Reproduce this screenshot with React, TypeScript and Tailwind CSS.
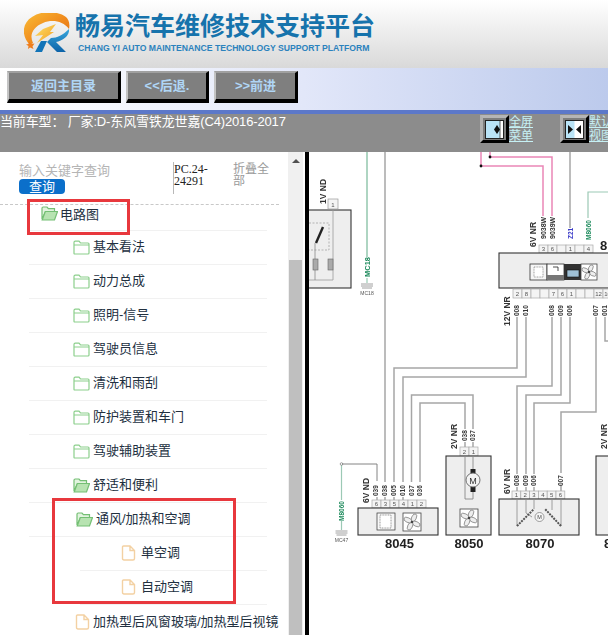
import React from "react";

const FONT = { fontFamily: '"Liberation Sans","Noto Sans CJK SC",sans-serif' };

function Logo() {
  return (
    <svg width="46" height="41" viewBox="24 13 46 41" className="shrink-0">
      <defs>
        <linearGradient id="ring" x1="0" y1="0" x2="1" y2="1">
          <stop offset="0" stopColor="#f9bd35" />
          <stop offset="0.55" stopColor="#f08a1d" />
          <stop offset="1" stopColor="#dd6a12" />
        </linearGradient>
        <linearGradient id="bolt" x1="0" y1="0" x2="1" y2="1">
          <stop offset="0" stopColor="#fde26a" />
          <stop offset="1" stopColor="#f29a1f" />
        </linearGradient>
        <linearGradient id="rblue" x1="0" y1="0" x2="0" y2="1">
          <stop offset="0" stopColor="#38a6dc" />
          <stop offset="1" stopColor="#0d63a8" />
        </linearGradient>
      </defs>
      <path d="M30 45 C21 36 22 23 32 17 C42 10 58 11 66 17 C69 20 70 24 69 29 C63 21 52 19 43 23 C33 27 29 35 33 43 Z" fill="url(#ring)" />
      <path d="M43 29 L56 24 L50 32 L54 32 L37 43 L43 35 L35 36 Z" fill="url(#bolt)" />
      <path d="M29 41 L31 44 L34.5 43.5 L32.5 46.5 L33.5 49 L30 47.5 L28 49 L28.5 46 L26 44.5 L28.5 44 Z" fill="#ee7d1c" />
      <path d="M69 29 C70 36 62 41 56 42 L66 52 L57 52 L47 42 L51 38 C57 38 63 35 69 29 Z" fill="url(#rblue)" />
      <path d="M41 41 L47 41 L42 52 L35 52 Z" fill="#1274b8" />
    </svg>
  );
}

function NavButton({ label, w }: { label: string; w: string }) {
  return (
    <div className={`${w} h-[32px] flex items-center justify-center bg-[#7f7f7f] border-t-2 border-l-2 border-t-[#a0a0a0] border-l-[#c4c4c4] border-r-[3px] border-b-[4px] border-r-black border-b-black text-[13px] font-bold text-[#b0d6f6]`}>
      {label}
    </div>
  );
}

function IconBtn({ double }: { double?: boolean }) {
  return (
    <div className="w-[29px] h-[28px] shrink-0 bg-[#7d7d7d] border-t-[3px] border-l-[3px] border-t-[#b5b5b5] border-l-[#b0b0b0] border-r-[3px] border-b-[3px] border-r-black border-b-black flex items-center justify-center">
      <svg width="19" height="19" viewBox="0 0 19 19">
        <rect x="0.5" y="0.5" width="18" height="18" fill="#b9e3f6" stroke="#222" />
        {double ? (
          <>
            <rect x="9.5" y="1" width="8.5" height="17" fill="#fff" />
            <path d="M3 5v9l5-4.5z" fill="#111" />
            <path d="M16 5v9l-5-4.5z" fill="#111" />
          </>
        ) : (
          <>
            <rect x="15" y="1" width="3" height="17" fill="#fff" />
            <path d="M15 1V18" stroke="#333" strokeWidth="0.8" />
            <path d="M12 5 L9 9.5 L12 14 L15 9.5Z" fill="#111" />
          </>
        )}
      </svg>
    </div>
  );
}

function FolderClosed() {
  return (
    <svg width="17" height="15" viewBox="0 0 17 15" className="shrink-0">
      <path d="M1 13.5 V2.5 Q1 1.2 2.3 1.2 H6 L7.5 3 H15 Q16 3 16 4 V13 Q16 14 15 14 H2 Q1 14 1 13.5Z M1 5 H16" fill="#fff" stroke="#8ccf8c" strokeWidth="1.2" />
    </svg>
  );
}

function FolderOpen() {
  return (
    <svg width="17" height="15" viewBox="0 0 17 15" className="shrink-0">
      <path d="M1 13 V2.2 Q1 1 2.2 1 H6 L7.4 2.7 H13.5 V5.5 H4.5 L1 13Z" fill="#e2f4df" stroke="#74bf74" strokeWidth="1.2" />
      <path d="M1.2 14 L4.3 5.5 H16.5 L13.5 14Z" fill="#b7e3b1" stroke="#74bf74" strokeWidth="1.2" />
    </svg>
  );
}

function FileIcon() {
  return (
    <svg width="15" height="16" viewBox="0 0 15 16" className="shrink-0">
      <path d="M2.5 1 H9 L13.5 5.5 V13.5 Q13.5 15 12 15 H3 Q1.5 15 1.5 13.5 V2 Q1.5 1 2.5 1Z M9 1 V5.5 H13.5" fill="#fff" stroke="#f3d1a3" strokeWidth="1.4" />
    </svg>
  );
}

type RowT = { label: string; kind: "closed" | "open" | "file"; pad: string };

const rows: RowT[] = [
  { label: "基本看法", kind: "closed", pad: "pl-[44px]" },
  { label: "动力总成", kind: "closed", pad: "pl-[44px]" },
  { label: "照明-信号", kind: "closed", pad: "pl-[44px]" },
  { label: "驾驶员信息", kind: "closed", pad: "pl-[44px]" },
  { label: "清洗和雨刮", kind: "closed", pad: "pl-[44px]" },
  { label: "防护装置和车门", kind: "closed", pad: "pl-[44px]" },
  { label: "驾驶辅助装置", kind: "closed", pad: "pl-[44px]" },
  { label: "舒适和便利", kind: "open", pad: "pl-[44px]" },
  { label: "通风/加热和空调", kind: "open", pad: "pl-[47px]" },
];

function Row({ r }: { r: RowT }) {
  return (
    <div className={`h-[34px] shrink-0 flex items-center gap-[3px] pb-px border-b border-[#f1f1f1] ml-[29px] w-[238px] whitespace-nowrap text-[13px] text-[#22303f] ${r.pad}`}>
      {r.kind === "closed" ? <FolderClosed /> : r.kind === "open" ? <FolderOpen /> : <FileIcon />}
      <span>{r.label}</span>
    </div>
  );
}

function Sub({ label }: { label: string }) {
  return (
    <div className="h-[34px] shrink-0 flex items-center gap-[5px] pb-px border-b border-[#f1f1f1] ml-[80px] w-[187px] pl-[41px] text-[13px] text-[#22303f] whitespace-nowrap">
      <FileIcon />
      <span>{label}</span>
    </div>
  );
}

const W = "#a6a6a6";
const SW = 1.5;
const TF = '"Liberation Sans",sans-serif';

function V({ x, y, t, s = 6.5, fill = "#333", b = true }: { x: number; y: number; t: string; s?: number; fill?: string; b?: boolean }) {
  return (
    <text x={x} y={y} transform={`rotate(-90 ${x} ${y})`} fontSize={s} fontFamily={TF} fontWeight={b ? 700 : 400} fill={fill}>
      {t}
    </text>
  );
}

function Pins({ x, y, w, h, labels }: { x: number; y: number; w: number; h: number; labels: string[] }) {
  return (
    <g>
      {labels.map((l, i) => (
        <g key={i}>
          <rect x={x + i * w} y={y} width={w} height={h} fill="#f4f4f4" stroke="#aaa" strokeWidth="0.7" />
          <text x={x + i * w + w / 2} y={y + h - 2} fontSize="6" textAnchor="middle" fontFamily={TF} fill="#555">
            {l}
          </text>
        </g>
      ))}
    </g>
  );
}

function Fan({ x, y, s }: { x: number; y: number; s: number }) {
  const c = s / 2;
  return (
    <g transform={`translate(${x} ${y})`}>
      <rect width={s} height={s} fill="#fff" stroke="#444" strokeWidth="0.8" />
      {[0, 90, 180, 270].map((a) => (
        <ellipse key={a} cx={c} cy={c - s * 0.25} rx={s * 0.13} ry={s * 0.24} fill="#eee" stroke="#666" strokeWidth="0.6" transform={`rotate(${a + 25} ${c} ${c})`} />
      ))}
      <circle cx={c} cy={c} r="1.3" fill="#444" />
    </g>
  );
}

function Ground({ x, y, label }: { x: number; y: number; label: string }) {
  return (
    <g>
      <path d={`M${x - 6} ${y}h12M${x - 6} ${y + 2}h12M${x - 5} ${y + 4}h10`} stroke="#888" strokeWidth="0.8" />
      <text x={x} y={y + 11} fontSize="5" textAnchor="middle" fontFamily={TF} fill="#555">
        {label}
      </text>
    </g>
  );
}

function Diagram() {
  return (
    <svg viewBox="309 152 299 483" className="block w-[299px] h-[483px] blur-[0.3px]">
      <rect x="309" y="152" width="299" height="483" fill="#fff" />
      {/* left relay */}
      <rect x="300" y="210" width="51" height="78" fill="#eee" stroke="#333" strokeWidth="1.1" />
      <rect x="328" y="199" width="10" height="10" fill="#f4f4f4" stroke="#999" strokeWidth="0.7" />
      <text x="333" y="207" fontSize="6" textAnchor="middle" fontFamily={TF} fill="#555">1</text>
      <path d="M309 223 H329 V250 H309" fill="none" stroke="#999" strokeWidth="0.7" strokeDasharray="2 1.5" />
      <path d="M333 210 V280 H309" fill="none" stroke="#999" strokeWidth="0.8" />
      <path d="M316 243 L323 227" stroke="#222" strokeWidth="2.4" />
      <path d="M315 243 V280" stroke="#888" strokeWidth="0.8" />
      <rect x="313" y="259" width="5" height="11" fill="#aaa" stroke="#666" strokeWidth="0.6" />
      <rect x="328" y="259" width="5" height="11" fill="#aaa" stroke="#666" strokeWidth="0.6" />
      <V x={326} y={204} t="1V ND" s={8.5} />
      {/* MC18 */}
      <path d="M367 152 V257" stroke="#93c7ae" strokeWidth={SW} />
      <path d="M367 278 V283" stroke="#93c7ae" strokeWidth="1.1" />
      <V x={369.5} y={277} t="MC18" s={7.5} fill="#1d8a5c" />
      <Ground x={367} y={284} label="MC18" />
      {/* long wire 039 */}
      <path d="M385 152 V482 M385 497 V500" stroke={W} strokeWidth={SW} fill="none" />
      {/* pink */}
      <path d="M481 152 V166 H543 V216" stroke="#ea86b6" strokeWidth={SW} fill="none" />
      <path d="M490 152 V157 H552 V216" stroke="#ea86b6" strokeWidth={SW} fill="none" />
      <circle cx="481" cy="166" r="1.4" fill="#111" />
      <circle cx="490" cy="157" r="1.4" fill="#111" />
      {/* top labels */}
      <path d="M570 152 V228" stroke={W} strokeWidth={SW} />
      <path d="M608 192 H588 V218" stroke="#9cc9b5" strokeWidth="1.2" fill="none" />
      <V x={536} y={247} t="6V NR" s={8.5} />
      <V x={545.5} y={239} t="9038W" s={7} />
      <V x={554.5} y={239} t="9039W" s={7} />
      <V x={573} y={239} t="Z21" s={6.5} fill="#3c3cc8" />
      <V x={591} y={240} t="M8060" s={6.5} fill="#1d8a5c" />
      {/* module 8xxx */}
      <Pins x={539} y={245} w={9} h={8} labels={["3", "6", "", "1", "", "4"]} />
      <rect x="499" y="253" width="120" height="35" fill="#eee" stroke="#333" strokeWidth="1.1" />
      <text x="600" y="250" fontSize="13" fontWeight="700" fontFamily={TF} fill="#222">8</text>
      <rect x="530" y="264" width="17" height="16" fill="#f6f6f6" stroke="#333" strokeWidth="0.8" />
      <rect x="534" y="267" width="9" height="10" fill="#fff" stroke="#666" strokeWidth="0.6" strokeDasharray="1 0.6" />
      <rect x="547" y="264" width="17" height="16" fill="#fff" stroke="#333" strokeWidth="0.8" />
      <rect x="547" y="275" width="17" height="5" fill="#777" />
      <path d="M553 267 h5 v4" stroke="#222" fill="none" strokeWidth="0.8" />
      <rect x="564" y="264" width="17" height="16" fill="#333" />
      <rect x="567" y="270" width="12" height="7" fill="#9fc0d6" stroke="#111" strokeWidth="0.6" />
      <Fan x={581} y={264} s={16} />
      <Pins x={513} y={289} w={9} h={9} labels={["2", "8", "", "", "7", "6", "1", "", "", "12", "10"]} />
      <V x={510} y={326} t="12V NR" s={8.5} />
      {[["008", 517], ["010", 526], ["008", 552], ["009", 561], ["006", 570], ["007", 596], ["001", 605]].map(([t, x]) => (
        <V key={String(x) + t} x={(x as number) + 2.3} y={316} t={t as string} />
      ))}
      {/* harness */}
      <path d="M517 317 V368 H394 V482 M394 497 V500" stroke={W} strokeWidth={SW} fill="none" />
      <path d="M526 317 V377 H403 V482 M403 497 V500" stroke={W} strokeWidth={SW} fill="none" />
      <path d="M552 317 V386 H517 V474 M517 487 V491" stroke={W} strokeWidth={SW} fill="none" />
      <path d="M561 317 V395 H526 V474 M526 487 V491" stroke={W} strokeWidth={SW} fill="none" />
      <path d="M570 317 V403 H534 V474 M534 487 V491" stroke={W} strokeWidth={SW} fill="none" />
      <path d="M596 317 V412 H561 V473 M561 485 V491" stroke={W} strokeWidth={SW} fill="none" />
      <path d="M605 317 V341 H608" stroke={W} strokeWidth={SW} fill="none" />
      <path d="M411.5 482 V395 H473 V429 M473 442 V447" stroke={W} strokeWidth={SW} fill="none" />
      <path d="M420 482 V403 H465 V429 M465 442 V447" stroke={W} strokeWidth={SW} fill="none" />
      {/* M8060 / 8045 */}
      <path d="M341.5 464 V500 M341.5 521 V530" stroke="#9cc9b5" strokeWidth="1.2" />
      <V x={344} y={521} t="M8060" fill="#1d8a5c" />
      <Ground x={341.5} y={531} label="MC47" />
      <circle cx="341.5" cy="464" r="1.3" fill="#fff" stroke="#666" strokeWidth="0.6" />
      <path d="M342 464 H377 V481 M377 497 V500" stroke="#777" strokeWidth="0.9" fill="none" />
      <V x={369} y={503} t="6V ND" s={8.5} />
      {[["039", 376], ["038", 385], ["005", 394], ["010", 403], ["037", 411.5], ["036", 420]].map(([t, x]) => (
        <V key={t as string} x={(x as number) + 2.3} y={496} t={t as string} />
      ))}
      <Pins x={372} y={500} w={9} h={8} labels={["6", "3", "5", "4", "1", "2"]} />
      <rect x="358" y="508" width="80" height="27" fill="#eee" stroke="#333" strokeWidth="1.1" />
      <rect x="377" y="513" width="18" height="17" fill="#f8f8f8" stroke="#333" strokeWidth="0.7" />
      <rect x="380" y="515" width="11" height="13" fill="#fff" stroke="#555" strokeWidth="0.6" strokeDasharray="1 0.6" />
      <Fan x={403} y={513} s={18} />
      <text x="399.5" y="548" fontSize="13" fontWeight="700" textAnchor="middle" fontFamily={TF} fill="#222">8045</text>
      {/* 8050 */}
      <V x={457} y={449} t="2V NR" s={8.5} />
      <V x={467.3} y={441} t="038" />
      <V x={475.3} y={441} t="037" />
      <Pins x={460} y={447} w={9} h={9} labels={["2", "1"]} />
      <rect x="446" y="456" width="45" height="79" fill="#eee" stroke="#333" strokeWidth="1.1" />
      <path d="M465 456 V499 H473 V492 M473 456 V470" stroke="#888" strokeWidth="0.9" fill="none" />
      <rect x="470.5" y="469" width="5" height="5" fill="#222" />
      <rect x="470.5" y="487" width="5" height="5" fill="#222" />
      <circle cx="473" cy="480" r="7" fill="#f4f4f4" stroke="#666" strokeWidth="0.9" />
      <text x="473" y="483.5" fontSize="9" textAnchor="middle" fontFamily={TF} fill="#333">M</text>
      <Fan x={460} y={509} s={18} />
      <text x="469" y="548" fontSize="13" fontWeight="700" textAnchor="middle" fontFamily={TF} fill="#222">8050</text>
      {/* 8070 */}
      <V x={510} y={494} t="6V NR" s={8.5} />
      {[["008", 517], ["009", 526], ["006", 534], ["007", 561]].map(([t, x]) => (
        <V key={t as string} x={(x as number) + 2.3} y={486} t={t as string} />
      ))}
      <Pins x={512} y={491} w={8.8} h={8} labels={["1", "2", "3", "4", "5", "6"]} />
      <rect x="499" y="499" width="80" height="36" fill="#eee" stroke="#333" strokeWidth="1.1" />
      <path d="M517 499 V526 M526 499 V513 L532 517 M534 499 V509 M561 499 V526 M552 499 V510" stroke="#888" strokeWidth="0.8" fill="none" />
      <path d="M517 526 L534 509" stroke="#555" strokeWidth="2" strokeDasharray="2 1" />
      <path d="M561 526 L545 509" stroke="#555" strokeWidth="2" strokeDasharray="2 1" />
      <circle cx="539.5" cy="517" r="4.5" fill="#f6f6f6" stroke="#777" strokeWidth="0.7" />
      <text x="539.5" y="519" fontSize="5.5" textAnchor="middle" fontFamily={TF} fill="#444">M</text>
      <text x="540" y="548" fontSize="13" fontWeight="700" textAnchor="middle" fontFamily={TF} fill="#222">8070</text>
      {/* right cut */}
      <V x={607} y={449} t="2V NR" s={8.5} />
      <rect x="596" y="456" width="45" height="79" fill="#eee" stroke="#333" strokeWidth="1.1" />
      <text x="604" y="548" fontSize="13" fontWeight="700" fontFamily={TF} fill="#222">8</text>
    </svg>
  );
}

export default function App() {
  return (
    <div className="relative w-[608px] h-[635px] overflow-hidden bg-white flex flex-col" style={FONT}>
      {/* header */}
      <div className="h-[68px] shrink-0 bg-gradient-to-b from-white to-[#d9d9d9] flex items-start pl-[24px] pt-[13px] gap-[5px]">
        <Logo />
        <div className="flex flex-col">
          <div className="text-[25px] leading-[28px] font-bold text-[#1673ac] whitespace-nowrap -mt-[1px]">畅易汽车维修技术支持平台</div>
          <div className="text-[8.65px] leading-[11px] font-bold text-[#2b82bd] whitespace-nowrap pl-[3px] mt-[3px]">CHANG YI AUTO MAINTENANCE TECHNOLOGY SUPPORT PLATFORM</div>
        </div>
      </div>
      {/* nav */}
      <div className="h-[46px] shrink-0 border-b-[4px] border-[#5c78c9] bg-gradient-to-r from-white via-[#e2e7f9] to-[#bccaec] flex items-start pl-[7px] pt-[3px] gap-[5px]">
        <NavButton label="返回主目录" w="w-[114px]" />
        <NavButton label="<<后退." w="w-[83px]" />
        <NavButton label=">>前进" w="w-[84px]" />
      </div>
      {/* car bar */}
      <div className="h-[38px] shrink-0 bg-[#8c8c8c] flex items-start overflow-hidden">
        <div className="w-[480px] shrink-0 text-[13px] leading-[16px] tracking-[-0.15px] text-white whitespace-nowrap">当前车型：&nbsp;厂家:D-东风雪铁龙世嘉(C4)2016-2017</div>
        <div className="flex items-start w-[80px] shrink-0 pt-[1px]">
          <IconBtn />
          <div className="text-[12px] leading-[14px] text-[#c6f0f4] underline w-[26px]">全屏<br />菜单</div>
        </div>
        <div className="flex items-start shrink-0 pt-[1px]">
          <IconBtn double />
          <div className="text-[12px] leading-[14px] text-[#c6f0f4] underline w-[26px]">默认<br />视图</div>
        </div>
      </div>
      {/* body */}
      <div className="flex-1 flex min-h-0">
        <div className="w-[288px] shrink-0 flex flex-col overflow-hidden">
          <div className="h-[53px] shrink-0 border-b border-dashed border-[#c8c8c8] flex pl-[19px] pt-[10px] w-[279px]">
            <div className="w-[154px] shrink-0">
              <div className="text-[13px] leading-[17px] text-[#b5b5b5]">输入关键字查询</div>
              <div className="w-[46px] h-[15px] rounded-[4px] bg-[#0b6fca] text-white text-[13px] leading-[15px] text-center">查询</div>
            </div>
            <div className="w-[60px] shrink-0 h-[32px] border-l border-[#b8b8b8] text-[12px] leading-[12px] text-[#222] font-['Liberation_Serif'] pt-px">PC.24-<br />24291</div>
            <div className="w-[37px] shrink-0 text-[12px] leading-[12px] text-[#9a9a9a] pt-px">折叠全部</div>
          </div>
          <div className="h-[26px] shrink-0 ml-[29px] w-[238px] pl-[12px] flex items-start gap-[2px] border-b border-[#f1f1f1] text-[13px] leading-[17px] text-[#22303f] pt-[1px]">
            <FolderOpen />
            <span>电路图</span>
          </div>
          {rows.map((r) => (
            <Row key={r.label} r={r} />
          ))}
          <Sub label="单空调" />
          <Sub label="自动空调" />
          <div className="h-[34px] shrink-0 flex items-center gap-[3px] pb-px ml-[29px] pl-[46px] whitespace-nowrap text-[13px] text-[#22303f]">
            <FileIcon />
            <span>加热型后风窗玻璃/加热型后视镜</span>
          </div>
        </div>
        <div className="w-[15px] shrink-0 bg-[#f0f0f0] flex flex-col items-center">
          <div className="h-[108px] w-full flex justify-center pt-[7px]">
            <div className="w-0 h-0 border-l-[4px] border-r-[4px] border-b-[4px] border-l-transparent border-r-transparent border-b-[#505050]" />
          </div>
          <div className="flex-1 w-[13px] bg-[#bfbfbf]" />
        </div>
        <div className="w-[2px] shrink-0 bg-white" />
        <div className="w-[4px] shrink-0 bg-black" />
        <div className="flex-1 min-w-0">
          <Diagram />
        </div>
      </div>
      {/* red annotation boxes */}
      <div className="absolute left-[27px] top-[199px] w-[103px] h-[36px] border-[3px] border-[#e8383d]" />
      <div className="absolute left-[52px] top-[498px] w-[184px] h-[106px] border-[3px] border-[#e8383d]" />
    </div>
  );
}
